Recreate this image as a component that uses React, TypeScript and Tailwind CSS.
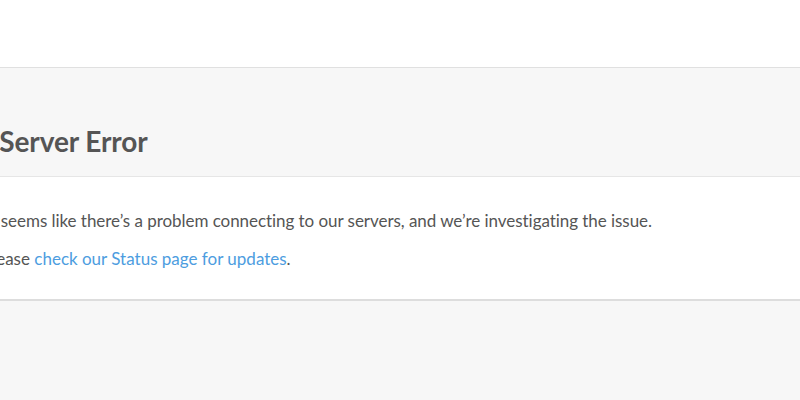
export default function App() {
  return (
    <div className="min-h-screen bg-[#f7f7f7] font-['Lato','Liberation_Sans',sans-serif] overflow-hidden">
      <header className="h-[68px] bg-white border-b border-[#e0e0e0]" />

      <section className="w-full">
        <div className="h-[109px] border-b border-[#e6e6e6] bg-[#f7f7f7] flex items-end pb-[18px]">
          <h1 className="ml-[-103px] whitespace-nowrap text-[28px] leading-[34px] font-bold text-[#555555] tracking-[-0.1px]">
            Internal Server Error
          </h1>
        </div>

        <div className="bg-white border-b-2 border-[#dddddd] pt-[32px] pb-[28px] text-[17px] leading-[24px] text-[#555555]">
          <p className="ml-[-14px] whitespace-nowrap tracking-[-0.05px]">
            It seems like there’s a problem connecting to our servers, and we’re investigating the issue.
          </p>
          <p className="ml-[-18px] mt-[14px] whitespace-nowrap">
            Please{" "}
            <a href="#" className="text-[#4d9de0]">
              check our Status page for updates
            </a>
            .
          </p>
        </div>
      </section>
    </div>
  )
}
